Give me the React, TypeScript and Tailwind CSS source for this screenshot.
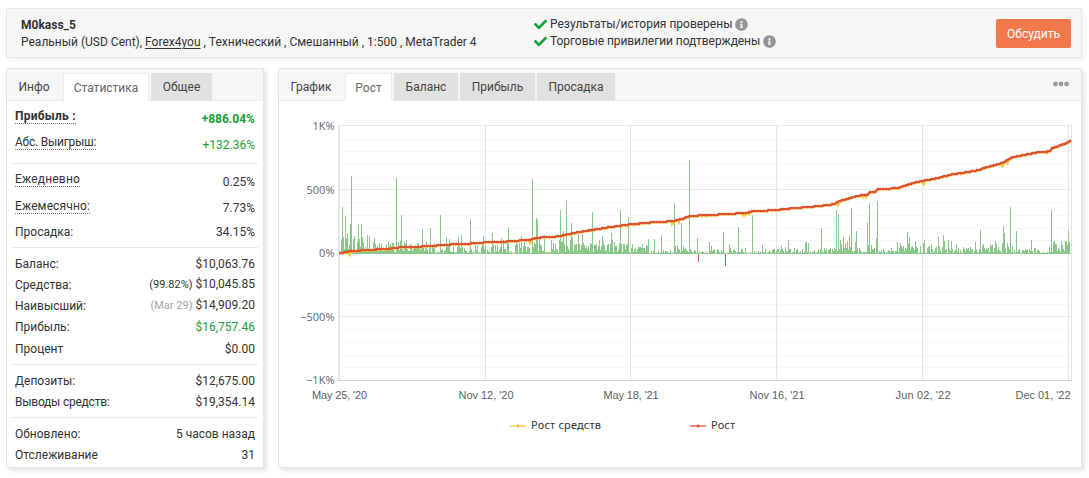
import React from 'react';
import { FaCheck, FaInfoCircle } from 'react-icons/fa';

interface StatRowProps {
  label: string;
  value: string;
  className?: string;
  labelClass?: string;
  valueClass?: string;
  note?: string;
  noteClass?: string;
}

function StatRow({ label, value, className = 'h-[21px]', labelClass = '', valueClass = '', note, noteClass = '' }: StatRowProps) {
  return (
    <div className={`flex items-end justify-between leading-4 pl-2 pr-2 ${className}`}>
      <span className={labelClass}>{label}</span>
      <span className={valueClass}>
        {note && <span className={`text-[11px] mr-[3px] ${noteClass}`}>{note}</span>}
        {value}
      </span>
    </div>
  );
}

interface TabProps {
  label: string;
  className: string;
  active?: boolean;
  first?: boolean;
}

function Tab({ label, className, active, first }: TabProps) {
  let look = 'bg-[#e1e1e1] text-[#444]';
  if (first) look = 'text-[#444] pr-0.5';
  if (active) look = 'bg-white text-[#666] border border-b-0 border-[#ececec]';
  return (
    <button className={`flex items-center justify-center h-7 whitespace-nowrap ${look} ${className}`}>
      {label}
    </button>
  );
}

// Daily profit bars, one value per pixel column starting at x = 341
const BARS = [
  15, 47, 17, 5, 37, 16, 21, 5, 9, 30, 78, 4, 15, 18, 4, 3, 12, 29, 15, 7, 30, 17, 12, 5, 7, 4, 19, 4, 18, 5, 3, 3, 12, 16, 10, 5, 8, 3, 11, 6,
  10, 3, 3, 5, 3, 10, 4, 12, 8, 10, 7, 11, 11, 3, 1, 76, 5, 12, 4, 13, 39, 5, 3, 12, 10, 14, 5, 3, 3, 10, 7, 3, 5, 6, 8, 7, 11, 10, 7, 4,
  5, 25, 6, 3, 7, 12, 4, 1, 6, 26, 2, 9, 6, 11, 1, 1, 2, 2, 1, 39, 4, 5, 1, 3, 4, 17, 7, 9, 15, 3, 2, 2, 7, 2, 1, 2, 7, 17, 8, 6,
  19, 7, 1, 6, 4, 3, 1, 1, 3, 35, 5, 1, 3, 0, 9, 4, 8, 1, 2, 0, 7, 9, 18, 5, 9, 1, 4, 3, 2, 1, 7, 21, 9, 2, 9, 3, 9, 2, 4,
  7, 16, 2, 14, 5, 5, 2, 11, 27, 2, 1, 3, 0, 1, 0, 9, 12, 10, 0, 11, 6, 18, 2, 8, 12, 8, 3, 7, 7, 6, 1, 1, 75, 7, 12, 10, 36, 34, 3, 16,
  10, 8, 3, 3, 19, 2, 1, 2, 1, 2, 1, 14, 5, 11, 3, 10, 5, 4, 1, 14, 44, 12, 13, 23, 10, 2, 53, 8, 5, 3, 14, 31, 17, 3, 10, 9, 10, 3, 20, 10,
  4, 9, 20, 11, 9, 6, 8, 5, 8, 3, 11, 10, 42, 2, 9, 9, 10, 4, 8, 14, 4, 8, 18, 13, 9, 3, 4, 9, 10, 3, 10, 21, 14, 2, 12, 8, 8, 2, 4, 11,
  44, 10, 2, 10, 10, 5, 9, 10, 37, 2, 0, 6, 10, 2, 5, 6, 2, 5, 7, 7, 7, 6, 10, 6, 6, 3, 9, 8, 15, 0, 1, 3, 0, 3, 15, 1, 1, 1, 3, 0,
  1, 19, 2, 4, 1, 3, 3, 2, 1, 1, 4, 1, 1, 0, 51, 8, 2, 9, 5, 4, 2, 31, 3, 8, 5, 6, 4, 3, 2, 94, 5, 3, 1, 2, 4, 3, 1, 16, -8,
  3, 0, 2, 3, 2, 1, 1, 2, 1, 0, 12, 3, 8, 3, 4, 5, 0, 1, 5, 4, 2, 1, 4, 2, 22, 1, -12, 0, 1, 1, 10, 6, 3, 1, 4, 4, 3, 1, 2, 27,
  2, 2, 5, 5, 2, 1, 6, 1, 0, 0, 0, 2, 0, 39, 0, 3, 0, 2, 0, 3, 1, 2, 0, 9, 2, 1, 5, 1, 0, 2, 4, 2, 1, 4, 5, 5, 1, 3, 5, 5,
  1, 4, 8, 5, 3, 1, 7, 3, 2, 14, 5, 5, 1, 2, 2, 6, 1, 4, 5, 1, 1, 3, 1, 5, 1, 2, 11, 13, 2, 11, 1, 2, 0, 2, 2, 4, 1, 1, 2, 5,
  1, 5, 26, 2, 1, 6, 4, 6, 1, 4, 5, 6, 1, 5, 3, 6, 5, 44, 3, 40, 5, 14, 10, 3, 17, 6, 11, 6, 13, 4, 19, 7, 46, 3, 2, 3, 12, 23, 5, 1,
  6, 4, 2, 1, 2, 2, 1, 2, 31, 9, 51, 2, 9, 5, 4, 6, 1, 16, 53, 1, 3, 2, 4, 1, 5, 3, 1, 1, 2, 4, 3, 2, 6, 3, 3, 1, 3, 3, 12, 2,
  6, 11, 8, 6, 8, 3, 6, 5, 22, 10, 17, 4, 7, 8, 6, 4, 13, 7, 6, 0, 1, 8, 1, 0, 11, 14, 1, 1, 6, 7, 8, 1, 10, 5, 1, 3, 6, 7, 1, 18,
  8, 3, 1, 7, 19, 13, 4, 5, 1, 14, 5, 3, 13, 5, 1, 3, 4, 10, 2, 6, 1, 4, 2, 1, 7, 5, 3, 6, 5, 6, 3, 7, 4, 5, 1, 3, 12, 5, 2, 1,
  5, 24, 2, 8, 10, 6, 4, 6, 5, 6, 2, 10, 8, 9, 2, 6, 13, 10, 3, 7, 4, 3, 1, 11, 28, 21, 6, 1, 11, 7, 5, 47, 2, 8, 1, 4, 1, 23, 2, 4,
  5, 0, 1, 4, 4, 3, 5, 4, 4, 1, 5, 3, 14, 3, 0, 6, 6, 1, 4, 4, 3, 1, 1, 1, 2, 1, 1, 1, 2, 1, 7, 2, 44, 2, 12, 13, 10, 10, 3, 6,
  5, 2, 13, 9, 5, 3, 13, 13, 9, 24, 12,
];

const GROWTH: [number, number][] = [
  [339, 253.3], [350, 251.3], [363, 250.3], [390, 248.7], [400, 247.3], [413, 247], [430, 246], [447, 244.7], [470, 243.5], [483, 242.5],
  [500, 242], [530, 239.7], [537, 237.7], [550, 237], [560, 236], [570, 233.7], [593, 229.7], [620, 225.7], [630, 224.3], [660, 221.7],
  [672, 221.3], [682, 219], [689, 216.3], [700, 215.4], [730, 213.9], [750, 212.4], [752, 211.3], [777, 210], [787, 208.7], [820, 206],
  [835, 204], [838, 201.7], [850, 198], [857, 196], [867, 194.7], [870, 192.3], [875, 192], [878, 189.3], [897, 188.2], [913, 183],
  [923, 180.7], [937, 178.3], [950, 174.7], [980, 170], [983, 168.3], [1003, 162.7], [1012, 157.3], [1037, 152.3], [1050, 151.3],
  [1052, 148.3], [1067, 143], [1071, 140],
];

// Short drops of equity below the growth line
const DIPS: Record<number, number> = {
  348: 1, 350: 3, 470: 1, 530: 3, 531: 3, 571: 1.5, 622: 1, 626: 1, 634: 1, 672: 3, 673: 2, 679: 2, 702: 1, 706: 1, 743: 2, 745: 2, 749: 2,
  838: 3, 839: 2, 863: 2, 866: 2, 923: 3, 924: 3, 961: 1, 1002: 3, 1003: 3, 1007: 3, 1008: 2, 1047: 1,
};

function growthAt(x: number) {
  const i = Math.max(1, GROWTH.findIndex(([px]) => px >= x));
  const [x0, y0] = GROWTH[i - 1];
  const [x1, y1] = GROWTH[i];
  return y0 + ((y1 - y0) * (x - x0)) / (x1 - x0);
}

const XS = Array.from({ length: 733 }, (_, i) => 339 + i);
const growthLine = XS.map((x) => `${x},${Math.round(growthAt(x))}`).join(' ');
const equityLine = XS.map((x) => `${x},${Math.round(growthAt(x)) + 0.5 + (DIPS[x] ?? 0)}`).join(' ');

const MINOR = [139, 151, 164, 177, 202, 215, 228, 240, 266, 278, 291, 304, 329, 342, 355, 367];
const MAJOR = [126, 190, 253, 317];
const Y_LABELS: [string, number][] = [['1K%', 130], ['500%', 194], ['0%', 257], ['−500%', 321], ['−1K%', 384]];
const X_LABELS: [string, number][] = [
  ["May 25, '20", 339.5], ["Nov 12, '20", 486], ["May 18, '21", 631], ["Nov 16, '21", 777], ["Jun 02, '22", 923], ["Dec 01, '22", 1043],
];

function Chart() {
  return (
    <svg className="block" width="802" height="366" viewBox="279 101 802 366">
      <g shapeRendering="crispEdges">
        {MINOR.map((y) => <rect key={y} x="339" y={y} width="733" height="1" fill="#f8f8f8" />)}
        {MAJOR.map((y) => <rect key={y} x="339" y={y - 1} width="733" height="1" fill="#e8e8ea" />)}
        {[485, 630, 776, 922, 1068, 1071].map((x) => <rect key={x} x={x} y="125" width="1" height="255" fill="#e4e4e6" />)}
        <rect x="338" y="125" width="2" height="255" fill="#e6e6e8" />
        <rect x="338" y="380" width="734" height="1" fill="#d0d0de" />
        <rect x="341" y="253" width="730" height="1" fill="#b4dcb4" />
        {BARS.map((h, i) => (
          <rect
            key={i}
            x={341 + i}
            y={h > 0 ? 254 - h : 254}
            width="1"
            height={Math.abs(h)}
            fill={h > 0 ? '#8ac88a' : '#d05a5a'}
          />
        ))}
      </g>
      <polyline points={equityLine} fill="none" stroke="#f8c840" strokeWidth="2.2" />
      <polyline points={growthLine} fill="none" stroke="#e4582f" strokeWidth="1.8" />
      {/* Point markers */}
      <polyline points={growthLine} fill="none" stroke="#d9502e" strokeWidth="2.6" strokeDasharray="1.6 1.4" />

      {/* Axis labels */}
      <g fontFamily="'Open Sans', sans-serif" fontSize="11" fill="#666">
        {Y_LABELS.map(([text, y]) => <text key={text} x="334.5" y={y} textAnchor="end">{text}</text>)}
      </g>
      <g fontFamily="'Liberation Sans', sans-serif" fontSize="11" fill="#606060">
        {X_LABELS.map(([text, x]) => <text key={text} x={x} y="399" textAnchor="middle" textLength="55">{text}</text>)}
      </g>

      {/* Legend */}
      <g fontFamily="'Noto Sans', sans-serif" fontSize="11" fill="#333">
        <rect x="510" y="425" width="16" height="2" fill="#f6dc72" />
        <circle cx="518" cy="426" r="1.5" fill="#f0c030" />
        <text x="531" y="429" textLength="70">Рост средств</text>
        <rect x="690" y="425" width="16" height="2" fill="#e88a7c" />
        <circle cx="698" cy="426" r="1.5" fill="#d84a38" />
        <text x="711" y="429" textLength="24">Рост</text>
      </g>
    </svg>
  );
}

export default function App() {
  return (
    <div className="w-[1089px] h-[478px] bg-white pt-2 pl-1.5 font-['Roboto',sans-serif] text-[12px] text-[#333]">
      {/* Account header */}
      <div className="flex w-[1076px] h-[50px] bg-[#f6f6f6] border border-[#e8e8e8] shadow-[2px_2px_4px_rgba(0,0,0,0.06)]">
        <div className="w-[527px] pl-3.5 pt-2 leading-[17px] whitespace-nowrap">
          <div className="font-bold">M0kass_5</div>
          <div>
            Реальный (USD Cent), <span className="underline underline-offset-2">Forex4you</span> , Технический , Смешанный , 1:500 , MetaTrader 4
          </div>
        </div>
        <div className="flex-1 pt-[7px] leading-[17px] whitespace-nowrap">
          <div className="flex items-center">
            <FaCheck className="w-[13px] h-[13px] mr-[3px] text-[#16a03c]" />
            Результаты/история проверены
            <FaInfoCircle className="w-[13px] h-[13px] ml-[3px] text-[#959595]" />
          </div>
          <div className="flex items-center tracking-[-0.005em]">
            <FaCheck className="w-[13px] h-[13px] mr-[3px] text-[#16a03c]" />
            Торговые привилегии подтверждены
            <FaInfoCircle className="w-[13px] h-[13px] ml-[3px] text-[#959595]" />
          </div>
        </div>
        <button className="w-[75px] h-[29px] mt-2.5 mr-2.5 rounded-xs bg-[#f2784b] text-white">Обсудить</button>
      </div>

      <div className="flex gap-3.5 mt-2.5">
        {/* Statistics */}
        <div className="w-[258px] h-[400px] bg-white border border-[#e4e4e6] shadow-[3px_3px_4px_rgba(0,0,0,0.1)]">
          <div className="flex h-8 pt-1 bg-[#f6f6f6] border-b border-[#ececec] text-[12px]">
            <Tab label="Инфо" className="w-14" first />
            <Tab label="Статистика" className="w-[86px]" active />
            <Tab label="Общее" className="w-[61px] ml-[2px]" />
          </div>
          <StatRow label="Прибыль :" value="+886.04%" className="h-[26px] font-bold" labelClass="leading-[13px] border-b border-dotted border-[#777] mb-[3px] tracking-[0.02em]" valueClass="text-[#16a03c]" />
          <StatRow label="Абс. Выигрыш:" value="+132.36%" className="h-[26px]" labelClass="leading-[13px] border-b border-dotted border-[#777] mb-[3px] tracking-[-0.02em]" valueClass="text-[#16a03c]" />
          <div className="h-px mx-[5px] mt-2.5 bg-[#eaeaea]" />
          <StatRow label="Ежедневно" value="0.25%" className="h-[26px]" labelClass="leading-[13px] border-b border-dotted border-[#777] mb-[3px] tracking-[0.015em]" />
          <StatRow label="Ежемесячно:" value="7.73%" className="h-[26px]" labelClass="leading-[13px] border-b border-dotted border-[#777] mb-[2px] tracking-[0.01em]" />
          <StatRow label="Просадка:" value="34.15%" className="h-6" />
          <div className="h-px mx-[5px] mt-[7px] bg-[#eaeaea]" />
          <StatRow label="Баланс:" value="$10,063.76" className="h-6" />
          <StatRow label="Средства:" value="$10,045.85" note="(99.82%)" />
          <StatRow label="Наивысший:" value="$14,909.20" note="(Mar 29)" noteClass="text-[#a5a5a5]" />
          <StatRow label="Прибыль:" value="$16,757.46" valueClass="text-[#16a03c]" />
          <StatRow label="Процент" value="$0.00" className="h-[22px]" />
          <div className="h-px mx-[5px] mt-[7px] bg-[#eaeaea]" />
          <StatRow label="Депозиты:" value="$12,675.00" className="h-6" />
          <StatRow label="Выводы средств:" value="$19,354.14" labelClass="tracking-[-0.02em]" />
          <div className="h-px mx-[5px] mt-[7px] bg-[#eaeaea]" />
          <StatRow label="Обновлено:" value="5 часов назад" className="h-6" />
          <StatRow label="Отслеживание" value="31" />
        </div>

        {/* Growth chart */}
        <div className="w-[804px] h-[400px] bg-white border border-[#e4e4e6] shadow-[3px_3px_4px_rgba(0,0,0,0.1)]">
          <div className="flex h-8 pt-1 bg-[#f6f6f6] border-b border-[#ececec] text-[12px]">
            <Tab label="График" className="w-[66px]" first />
            <Tab label="Рост" className="w-[47px]" active />
            <Tab label="Баланс" className="w-[64px] ml-[2px]" />
            <Tab label="Прибыль" className="w-[75px] ml-[2px]" />
            <Tab label="Просадка" className="w-[78px] ml-[2px]" />
            <svg className="ml-auto mr-3 mt-2" width="16" height="6" fill="#999">
              <circle cx="2.5" cy="3" r="2.4" />
              <circle cx="8" cy="3" r="2.4" />
              <circle cx="13.5" cy="3" r="2.4" />
            </svg>
          </div>
          <Chart />
        </div>
      </div>
    </div>
  );
}
